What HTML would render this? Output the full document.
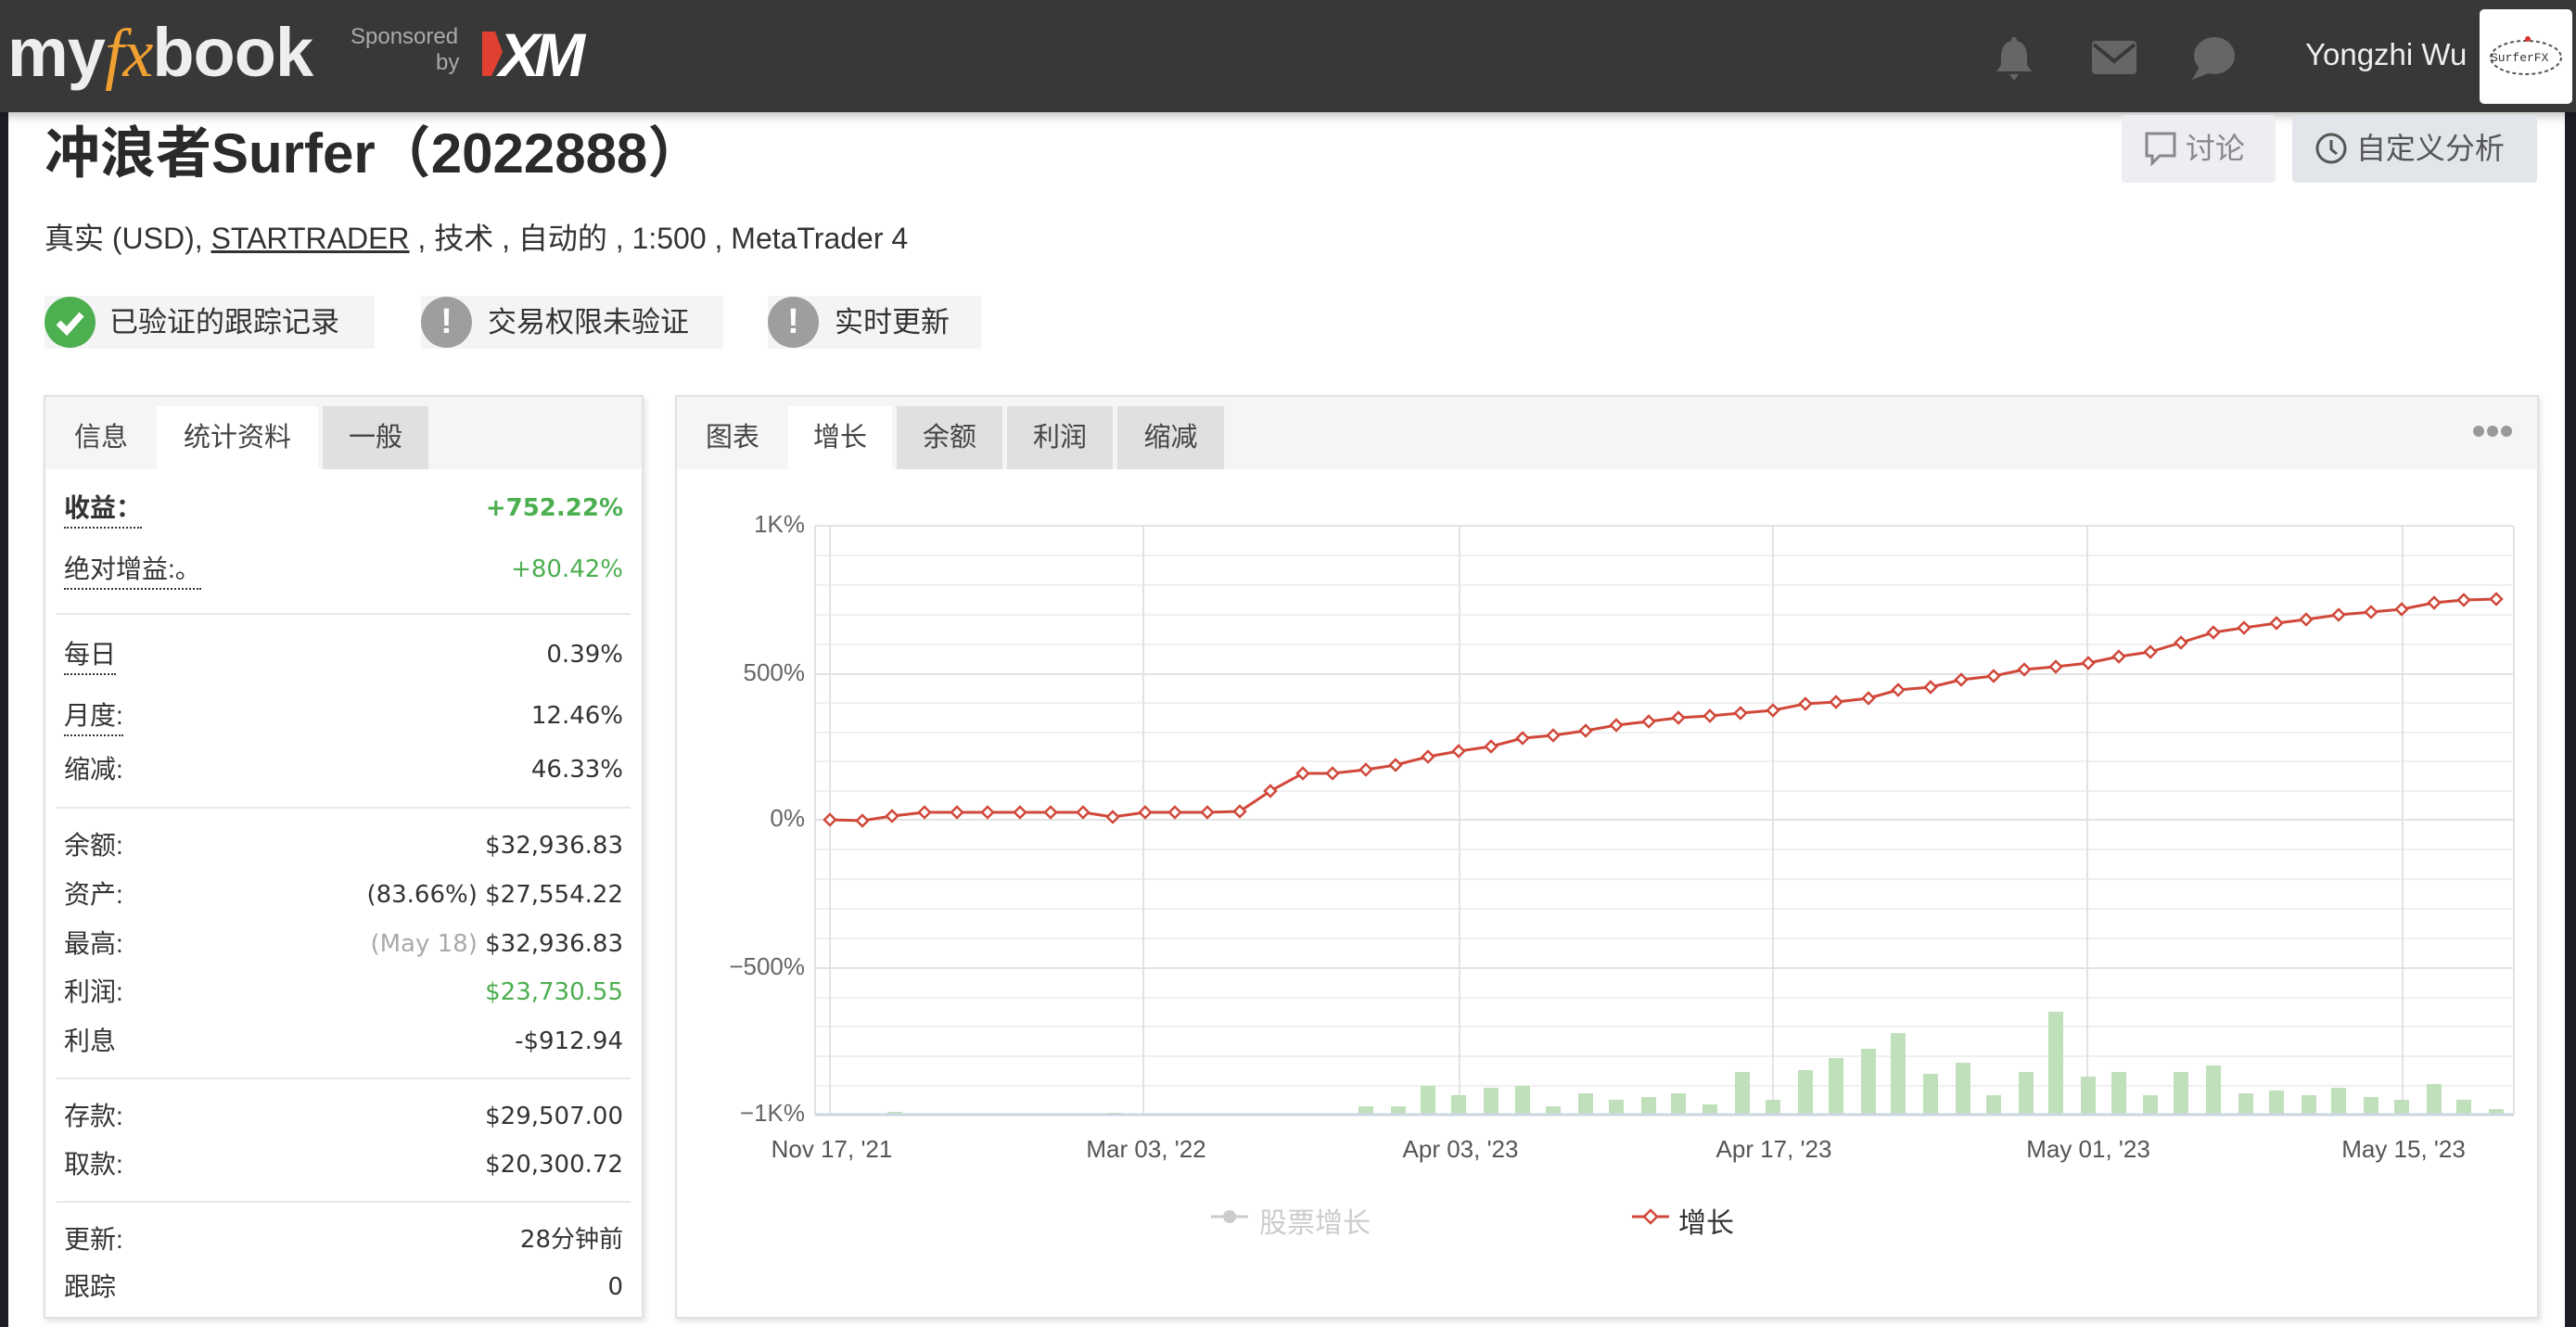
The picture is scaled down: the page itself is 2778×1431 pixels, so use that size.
<!DOCTYPE html>
<html><head><meta charset="utf-8">
<style>
*{margin:0;padding:0;box-sizing:border-box}
body{width:2778px;height:1431px;position:relative;overflow:hidden;background:#fff;font-family:"Liberation Sans","Noto Sans CJK SC",sans-serif;color:#333}
.a{position:absolute;white-space:nowrap}
#hdr{left:0;top:0;width:2778px;height:121px;background:#383838;box-shadow:0 4px 10px rgba(0,0,0,.25)}
.badge{position:absolute;top:319px;height:57px;background:#f4f4f4;font-size:31px;line-height:57px;color:#333}
.ic{position:absolute;left:0;top:1px;width:55px;height:55px;border-radius:50%;color:#fff;text-align:center;font-weight:bold}
.panel{position:absolute;border:2px solid #e2e2e2;background:#fff;box-shadow:2px 3px 6px rgba(0,0,0,.12)}
.tabbar{position:absolute;left:0;top:0;right:0;height:78px;background:#f5f5f5}
.tab{position:absolute;top:10px;height:68px;line-height:68px;font-size:29px;text-align:center;color:#444}
.row{position:absolute;left:20px;right:20px;font-size:28px;height:40px;line-height:40px}
.row .l{position:absolute;left:0;color:#333}
.row .v{position:absolute;right:0;font-family:"DejaVu Sans",sans-serif;font-size:26px;color:#333}
.row .v.g{color:#4caf50}
.dot{border-bottom:2px dotted #333}
.sep{position:absolute;left:12px;right:12px;height:2px;background:#e8e8e8}
.yl{position:absolute;right:1910px;font-size:26px;color:#666;text-align:right}
.xl{position:absolute;top:1224px;font-size:26px;color:#555;transform:translateX(-50%)}
</style></head><body>
<div class="a" style="left:0;top:0;width:9px;height:1431px;background:#1e1e28"></div>
<div class="a" style="left:2766px;top:0;width:12px;height:1431px;background:#1e1e28"></div>
<div id="hdr" class="a">
  <div class="a" style="left:8px;top:14px;font-size:74px;font-weight:bold;color:#eee;letter-spacing:-1px">my<span style="color:#f0a030;font-style:italic;font-family:'Liberation Serif',serif;font-weight:normal">fx</span>book</div>
  <div class="a" style="left:378px;top:26px;font-size:24px;color:#aaa">Sponsored</div>
  <div class="a" style="left:470px;top:54px;font-size:24px;color:#aaa">by</div>
  <svg class="a" style="left:520px;top:26px" width="145" height="62"><polygon points="0,8 14,8 22,30 10,56 0,56" fill="#e04030"/><text x="18" y="56" font-family="Liberation Sans" font-weight="bold" font-style="italic" font-size="66" fill="#fff" letter-spacing="-6">XM</text></svg>
  <svg class="a" style="left:2150px;top:38px" width="44" height="50" viewBox="0 0 44 50"><path d="M22 2c-2 0-3 2-3 4-8 2-11 9-11 17v9l-5 7h38l-5-7v-9c0-8-3-15-11-17 0-2-1-4-3-4z" fill="#666"/><path d="M17 42h10l-5 7z" fill="#666"/></svg>
  <svg class="a" style="left:2256px;top:44px" width="48" height="36"><rect x="0" y="0" width="48" height="36" rx="4" fill="#666"/><path d="M2 4 24 22 46 4" stroke="#383838" stroke-width="4" fill="none"/></svg>
  <svg class="a" style="left:2362px;top:38px" width="48" height="48"><ellipse cx="26" cy="22" rx="22" ry="20" fill="#666"/><path d="M10 34 2 48 22 40z" fill="#666"/></svg>
  <div class="a" style="left:2486px;top:40px;font-size:33px;color:#eee">Yongzhi Wu</div>
  <div class="a" style="left:2674px;top:10px;width:100px;height:102px;background:#fff;border-radius:5px">
    <svg width="100" height="102"><ellipse cx="50" cy="52" rx="38" ry="18" fill="none" stroke="#555" stroke-width="2" stroke-dasharray="4 3"/><text x="12" y="56" font-size="13" font-family="Liberation Mono" fill="#333">SurferFX</text><circle cx="52" cy="32" r="3" fill="#d33"/></svg>
  </div>
</div>
<div class="a" style="left:48px;top:117px;font-size:60px;color:#2a2a2a;font-weight:bold;-webkit-text-stroke:0px">冲浪者Surfer（2022888）</div>
<div class="a" style="left:48px;top:232px;font-size:32px;color:#333">真实 (USD), <span style="text-decoration:underline">STARTRADER</span> , 技术 , 自动的 , 1:500 , MetaTrader 4</div>
<div class="a" style="left:2288px;top:124px;width:166px;height:73px;background:#eceef2;border-radius:4px;font-size:32px;line-height:73px;color:#888;padding-left:24px"><svg width="36" height="38" style="vertical-align:-8px"><path d="M3 3h30v24H17l-8 8v-8H3z" fill="none" stroke="#888" stroke-width="3"/></svg> 讨论</div>
<div class="a" style="left:2472px;top:124px;width:264px;height:73px;background:#e2e5ea;border-radius:4px;font-size:32px;line-height:73px;color:#555;padding-left:24px"><svg width="36" height="36" style="vertical-align:-7px"><circle cx="18" cy="18" r="15" fill="none" stroke="#555" stroke-width="3"/><path d="M18 9v10l6 5" fill="none" stroke="#555" stroke-width="3"/></svg> 自定义分析</div>

<div class="badge" style="left:48px;width:356px"><div class="ic" style="background:#4caf50"><svg width="55" height="55"><path d="M15 28 24 37 40 19" stroke="#fff" stroke-width="7" fill="none"/></svg></div><span style="position:absolute;left:70px">已验证的跟踪记录</span></div>
<div class="badge" style="left:454px;width:326px"><div class="ic" style="background:#9e9e9e;font-size:38px;line-height:55px">!</div><span style="position:absolute;left:72px">交易权限未验证</span></div>
<div class="badge" style="left:828px;width:230px"><div class="ic" style="background:#9e9e9e;font-size:38px;line-height:55px">!</div><span style="position:absolute;left:72px">实时更新</span></div>

<div class="panel" style="left:47px;top:426px;width:647px;height:996px">
  <div class="tabbar">
    <div class="tab" style="left:0;width:120px">信息</div>
    <div class="tab" style="left:120px;width:174px;background:#fff">统计资料</div>
    <div class="tab" style="left:299px;width:114px;background:#e0e0e0">一般</div>
  </div>
  <div class="row" style="top:100px"><span class="l dot" style="font-weight:bold">收益：</span><span class="v g" style="font-weight:bold">+752.22%</span></div>
  <div class="row" style="top:166px"><span class="l dot">绝对增益:。</span><span class="v g">+80.42%</span></div>
  <div class="sep" style="top:233px"></div>
  <div class="row" style="top:258px"><span class="l dot">每日</span><span class="v">0.39%</span></div>
  <div class="row" style="top:324px"><span class="l dot">月度:</span><span class="v">12.46%</span></div>
  <div class="row" style="top:382px"><span class="l">缩减:</span><span class="v">46.33%</span></div>
  <div class="sep" style="top:442px"></div>
  <div class="row" style="top:464px"><span class="l">余额:</span><span class="v">$32,936.83</span></div>
  <div class="row" style="top:517px"><span class="l">资产:</span><span class="v">(83.66%) $27,554.22</span></div>
  <div class="row" style="top:570px"><span class="l">最高:</span><span class="v"><span style="color:#aaa">(May 18)</span> $32,936.83</span></div>
  <div class="row" style="top:622px"><span class="l">利润:</span><span class="v g">$23,730.55</span></div>
  <div class="row" style="top:675px"><span class="l">利息</span><span class="v">-$912.94</span></div>
  <div class="sep" style="top:734px"></div>
  <div class="row" style="top:756px"><span class="l">存款:</span><span class="v">$29,507.00</span></div>
  <div class="row" style="top:808px"><span class="l">取款:</span><span class="v">$20,300.72</span></div>
  <div class="sep" style="top:867px"></div>
  <div class="row" style="top:889px"><span class="l">更新:</span><span class="v">28分钟前</span></div>
  <div class="row" style="top:940px"><span class="l">跟踪</span><span class="v">0</span></div>
</div>

<div class="panel" style="left:728px;top:426px;width:2010px;height:996px">
  <div class="tabbar">
    <div class="tab" style="left:0;width:120px">图表</div>
    <div class="tab" style="left:120px;width:112px;background:#fff">增长</div>
    <div class="tab" style="left:237px;width:114px;background:#e0e0e0">余额</div>
    <div class="tab" style="left:356px;width:114px;background:#e0e0e0">利润</div>
    <div class="tab" style="left:475px;width:115px;background:#e0e0e0">缩减</div>
    <svg style="position:absolute;left:1936px;top:30px" width="44" height="14"><circle cx="7" cy="7" r="6" fill="#999"/><circle cx="22" cy="7" r="6" fill="#999"/><circle cx="37" cy="7" r="6" fill="#999"/></svg>
  </div>
</div>

<svg class="a" style="left:0;top:0" width="2778" height="1431">
  <g stroke="#f0f0f0" stroke-width="2">
    <line x1="879" y1="599" x2="2711" y2="599"/><line x1="879" y1="631" x2="2711" y2="631"/><line x1="879" y1="663" x2="2711" y2="663"/><line x1="879" y1="695" x2="2711" y2="695"/>
    <line x1="879" y1="758" x2="2711" y2="758"/><line x1="879" y1="790" x2="2711" y2="790"/><line x1="879" y1="821" x2="2711" y2="821"/><line x1="879" y1="853" x2="2711" y2="853"/>
    <line x1="879" y1="916" x2="2711" y2="916"/><line x1="879" y1="948" x2="2711" y2="948"/><line x1="879" y1="980" x2="2711" y2="980"/><line x1="879" y1="1012" x2="2711" y2="1012"/>
    <line x1="879" y1="1076" x2="2711" y2="1076"/><line x1="879" y1="1107" x2="2711" y2="1107"/><line x1="879" y1="1139" x2="2711" y2="1139"/><line x1="879" y1="1171" x2="2711" y2="1171"/>
  </g>
  <g stroke="#e3e3e3" stroke-width="2">
    <line x1="879" y1="567" x2="2711" y2="567"/><line x1="879" y1="727" x2="2711" y2="727"/><line x1="879" y1="884" x2="2711" y2="884"/><line x1="879" y1="1044" x2="2711" y2="1044"/>
    <line x1="895" y1="567" x2="895" y2="1202"/><line x1="1233" y1="567" x2="1233" y2="1202"/><line x1="1574" y1="567" x2="1574" y2="1202"/><line x1="1912" y1="567" x2="1912" y2="1202"/><line x1="2251" y1="567" x2="2251" y2="1202"/><line x1="2591" y1="567" x2="2591" y2="1202"/>
    <line x1="879" y1="567" x2="879" y2="1202"/><line x1="2711" y1="567" x2="2711" y2="1202"/>
  </g>
  <g fill="#bfe0ba">
    <rect x="957" y="1199" width="16" height="3"/><rect x="1194" y="1200" width="16" height="2"/>
    <rect x="1465" y="1193" width="16" height="9"/><rect x="1500" y="1193" width="16" height="9"/><rect x="1532" y="1171" width="16" height="31"/><rect x="1565" y="1181" width="16" height="21"/><rect x="1600" y="1173" width="16" height="29"/><rect x="1634" y="1171" width="16" height="31"/><rect x="1667" y="1193" width="16" height="9"/>
    <rect x="1702" y="1179" width="16" height="23"/><rect x="1735" y="1186" width="16" height="16"/><rect x="1770" y="1183" width="16" height="19"/><rect x="1802" y="1179" width="16" height="23"/><rect x="1836" y="1191" width="16" height="11"/><rect x="1871" y="1156" width="16" height="46"/><rect x="1904" y="1186" width="16" height="16"/><rect x="1939" y="1154" width="16" height="48"/><rect x="1972" y="1141" width="16" height="61"/><rect x="2007" y="1131" width="16" height="71"/><rect x="2039" y="1114" width="16" height="88"/><rect x="2074" y="1158" width="16" height="44"/><rect x="2109" y="1146" width="16" height="56"/><rect x="2142" y="1181" width="16" height="21"/><rect x="2177" y="1156" width="16" height="46"/><rect x="2209" y="1091" width="16" height="111"/><rect x="2244" y="1161" width="16" height="41"/><rect x="2277" y="1156" width="16" height="46"/><rect x="2311" y="1181" width="16" height="21"/><rect x="2344" y="1156" width="16" height="46"/><rect x="2379" y="1149" width="16" height="53"/><rect x="2414" y="1179" width="16" height="23"/><rect x="2447" y="1176" width="16" height="26"/><rect x="2482" y="1181" width="16" height="21"/><rect x="2514" y="1173" width="16" height="29"/><rect x="2549" y="1183" width="16" height="19"/><rect x="2582" y="1186" width="16" height="16"/><rect x="2617" y="1169" width="16" height="33"/><rect x="2649" y="1186" width="16" height="16"/><rect x="2684" y="1196" width="16" height="6"/>
  </g>
  <line x1="879" y1="1202" x2="2711" y2="1202" stroke="#ccd6e0" stroke-width="3"/>
  <polyline id="pl" fill="none" stroke="#d0483a" stroke-width="3" points="895,884 930,885 962,880 997,876 1032,876 1065,876 1100,876 1133,876 1168,876 1200,881 1235,876 1267,876 1302,876 1337,875 1370,853 1405,834 1437,834 1473,830 1505,825 1540,816 1573,810 1608,805 1642,796 1675,793 1710,788 1743,782 1778,778 1810,774 1844,772 1877,769 1912,766 1947,759 1980,757 2015,753 2047,744 2082,741 2115,733 2150,729 2183,722 2217,719 2252,715 2285,708 2319,703 2352,693 2387,682 2420,677 2455,672 2487,668 2522,663 2557,660 2590,657 2625,650 2657,647 2692,646"/>
  <g id="mk" fill="#fff" stroke="#d0483a" stroke-width="2.5"></g>
  <line x1="1306" y1="1312" x2="1346" y2="1312" stroke="#ccc" stroke-width="3"/><circle cx="1326" cy="1312" r="7" fill="#ccc"/>
  <line x1="1760" y1="1312" x2="1800" y2="1312" stroke="#d0483a" stroke-width="3"/><path d="M1780 1305 1787 1312 1780 1319 1773 1312z" fill="#fff" stroke="#d0483a" stroke-width="2.5"/>
</svg>
<div class="yl" style="top:550px">1K%</div>
<div class="yl" style="top:710px">500%</div>
<div class="yl" style="top:867px">0%</div>
<div class="yl" style="top:1027px">−500%</div>
<div class="yl" style="top:1185px">−1K%</div>
<div class="xl" style="left:897px">Nov 17, '21</div>
<div class="xl" style="left:1236px">Mar 03, '22</div>
<div class="xl" style="left:1575px">Apr 03, '23</div>
<div class="xl" style="left:1913px">Apr 17, '23</div>
<div class="xl" style="left:2252px">May 01, '23</div>
<div class="xl" style="left:2592px">May 15, '23</div>
<div class="a" style="left:1358px;top:1294px;font-size:30px;color:#ccc">股票增长</div>
<div class="a" style="left:1810px;top:1294px;font-size:30px;color:#333">增长</div>
<script>
var p=document.getElementById('pl').getAttribute('points').trim().split(/\s+/),g=document.getElementById('mk'),s='';
p.forEach(function(q){var a=q.split(',');var x=+a[0],y=+a[1];s+='<path d="M'+x+' '+(y-6)+' L'+(x+6)+' '+y+' L'+x+' '+(y+6)+' L'+(x-6)+' '+y+'Z"/>';});
g.innerHTML=s;
</script>
</body></html>
